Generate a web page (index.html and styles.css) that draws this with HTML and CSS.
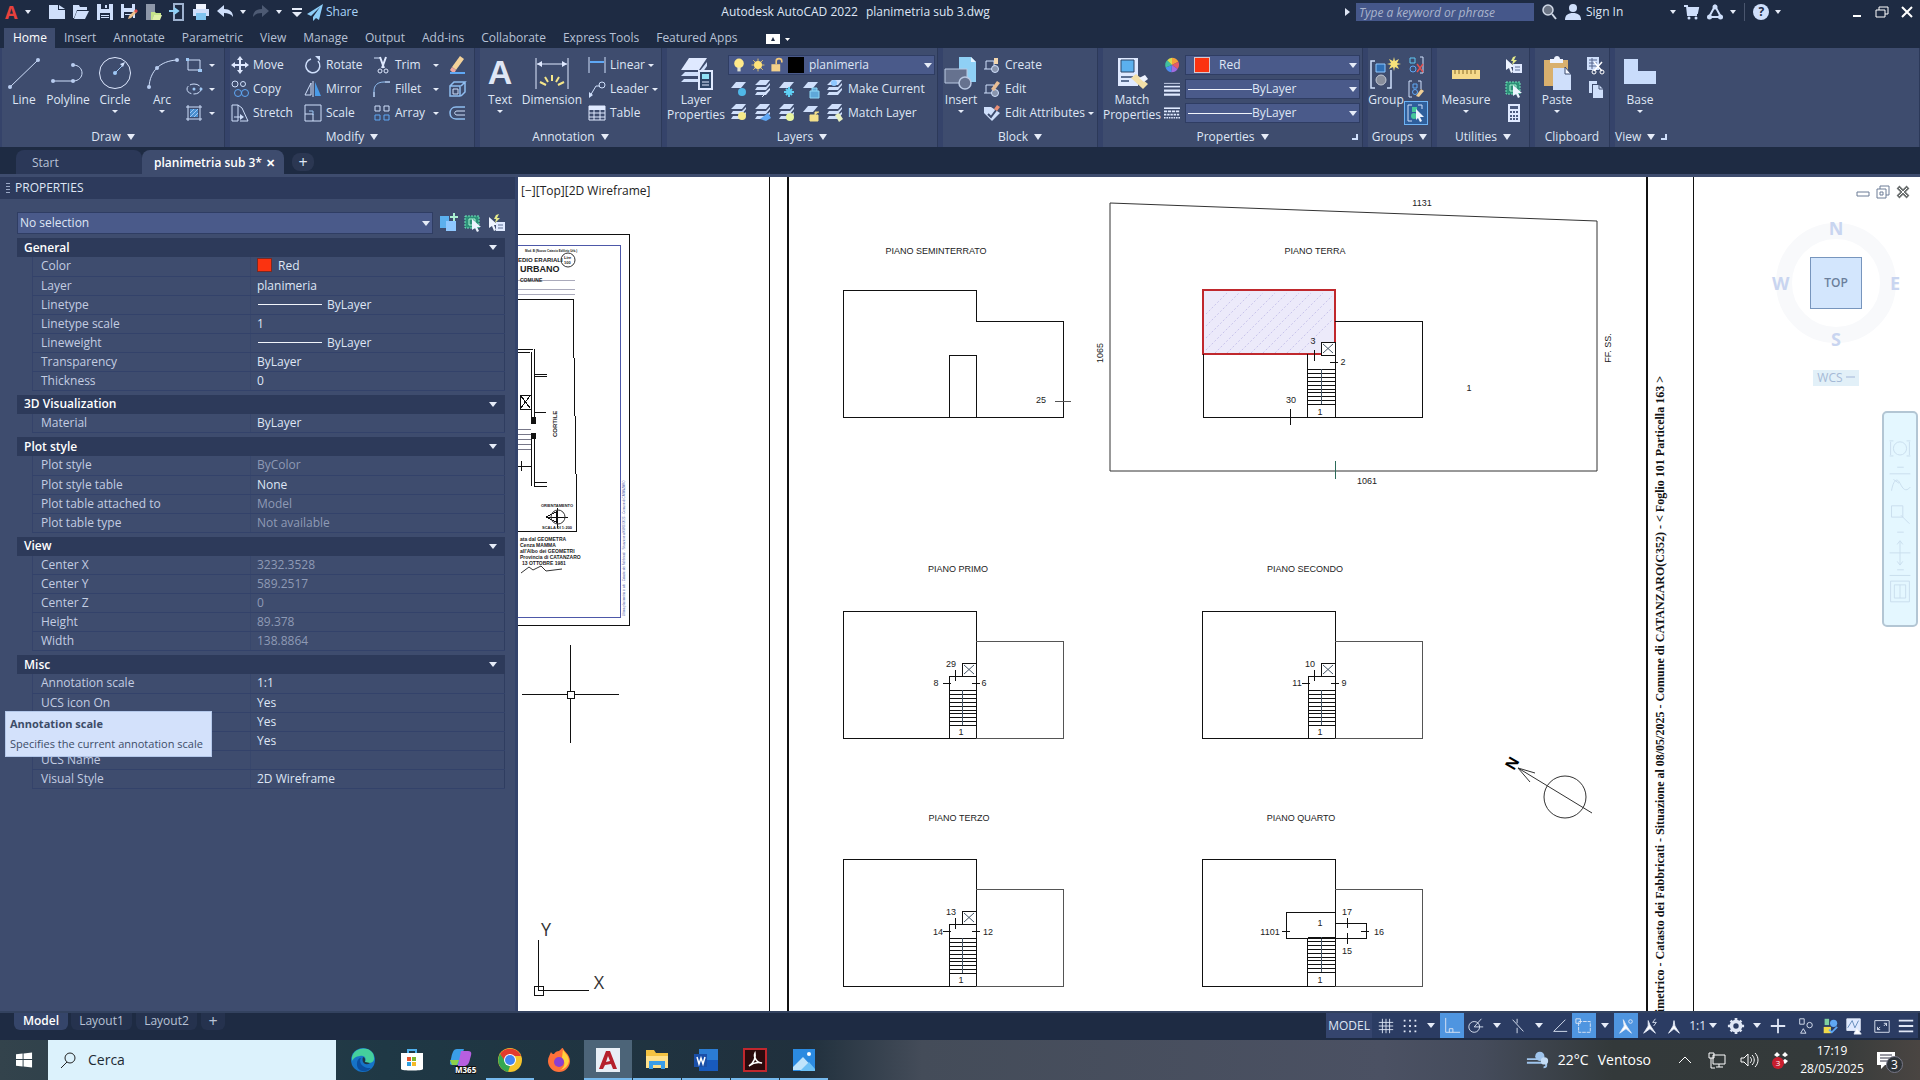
FILE: index.html
```
<!DOCTYPE html>
<html lang="en">
<head>
  <meta charset="UTF-8">
  <meta name="viewport" content="width=device-width, initial-scale=1.0">
  <title>Autodesk AutoCAD 2022 - planimetria sub 3.dwg</title>
  <link rel="stylesheet" href="styles.css">
</head>
<body>
  <!-- Icon sheet -->
  <svg class="sheet" aria-hidden="true">
    <symbol id="i-new" viewBox="0 0 18 18"><path d="M1 2h9v5h7v9H1z" fill="#cfdffb"/><path d="M11 2l6 4h-6z" fill="#cfdffb"/></symbol>
    <symbol id="i-open" viewBox="0 0 18 18"><path d="M1 2h6l1 2h7v3H5L2 15H1z" fill="#cfdffb"/><path d="M5 8h12l-4 8H2z" fill="#cfdffb"/></symbol>
    <symbol id="i-save" viewBox="0 0 18 18"><path d="M1 1h16v16H1z" fill="#cfdffb"/><path d="M5 1h8v5H5zM4 10h10v7H4z" fill="#1e2b43"/><path d="M9 2h2v3H9zM5 12h8v1H5zM5 14h8v1H5z" fill="#cfdffb"/></symbol>
    <symbol id="i-saveas" viewBox="0 0 18 18"><path d="M1 1h14v14H1z" fill="#cfdffb"/><path d="M4 1h8v4H4zM4 9h9v6H4z" fill="#1e2b43"/><path d="M5 11h7v1H5z" fill="#cfdffb"/><path d="M8 16l1-3 6-6 2 2-6 6z" fill="#eec08a"/><path d="M14 8l2-2 2 2-2 2z" fill="#e0504f"/></symbol>
    <symbol id="i-web" viewBox="0 0 18 18"><path d="M2 1h9v16H2z" fill="#8d97a8"/><path d="M7 9h4l1 1h5v2h-7l-2 5H7z" fill="#c5e48a"/><path d="M10 12h8l-2 5H8z" fill="#e0f2a8"/></symbol>
    <symbol id="i-mobile" viewBox="0 0 18 18"><path d="M6 1h9v16H6z" fill="none" stroke="#9fb3d0" stroke-width="2"/><path d="M1 8h8M6 5l4 3-4 3" stroke="#8fd0f5" stroke-width="2" fill="none"/></symbol>
    <symbol id="i-print" viewBox="0 0 18 18"><path d="M4 1h10v5H4z" fill="#f0f5ff"/><path d="M1 6h16v7H1z" fill="#cfdffb"/><path d="M4 10h10v7H4z" fill="#7fc4f0"/></symbol>
    <symbol id="i-undo" viewBox="0 0 18 18"><path d="M1 8l7-6v4c6 0 9 3 9 8-2-3-5-4-9-4v4z" fill="#cfdffb"/></symbol>
    <symbol id="i-redo" viewBox="0 0 18 18"><path d="M17 8l-7-6v4c-6 0-9 3-9 8 2-3 5-4 9-4v4z" fill="#4d5a73"/></symbol>
    <symbol id="i-share" viewBox="0 0 18 18"><path d="M17 1L1 11l4 2 9-9-7 10v4l3-3 3 2z" fill="#8ccdf8"/></symbol>
    <symbol id="i-search" viewBox="0 0 18 18"><circle cx="8" cy="7" r="5" fill="#6b7484" stroke="#cfd8e6" stroke-width="1.5"/><path d="M12 11l4 5" stroke="#cfd8e6" stroke-width="2"/></symbol>
    <symbol id="i-user" viewBox="0 0 18 18"><circle cx="9" cy="5" r="4" fill="#cfdffb"/><path d="M1 17c0-5 3-7 8-7s8 2 8 7z" fill="#cfdffb"/></symbol>
    <symbol id="i-cart" viewBox="0 0 18 18"><path d="M2 3h3l1 9h9M6 5h10l-1 5H6" stroke="#cfdffb" stroke-width="2" fill="none"/><path d="M6 5h10l-1 4H6z" fill="#cfdffb"/><circle cx="7" cy="15" r="1.5" fill="#cfdffb"/><circle cx="14" cy="15" r="1.5" fill="#cfdffb"/></symbol>
    <symbol id="i-adsk" viewBox="0 0 18 18"><path d="M9 3l-6 11h12z" fill="none" stroke="#cfdffb" stroke-width="2"/><circle cx="9" cy="4" r="2.500" fill="#cfdffb"/><circle cx="3.500" cy="14" r="2.500" fill="#cfdffb"/><circle cx="14.500" cy="14" r="2.500" fill="#cfdffb"/></symbol>

    <symbol id="i-line" viewBox="0 0 34 34"><path d="M3 31L31 4" stroke="#cfdffb"/><circle cx="3" cy="31" r="2" fill="#b9cdf0"/><circle cx="31" cy="4" r="2" fill="#b9cdf0"/></symbol>
    <symbol id="i-pline" viewBox="0 0 34 34"><path d="M2 25h20c12 0 12-16 0-16" stroke="#cfdffb" fill="none"/><circle cx="2" cy="25" r="2" fill="#b9cdf0"/><circle cx="22" cy="25" r="2" fill="#b9cdf0"/><circle cx="22" cy="9" r="2" fill="#b9cdf0"/></symbol>
    <symbol id="i-circle" viewBox="0 0 34 34"><circle cx="17" cy="17" r="15.500" stroke="#dfe9ff" fill="none"/><path d="M17 17l9-9" stroke="#9fc8f5"/><circle cx="17" cy="17" r="2" fill="#9fc8f5"/><path d="M27 6l-2 5-3-3z" fill="#cfdffb"/></symbol>
    <symbol id="i-arc" viewBox="0 0 34 34"><path d="M4 31C5 15 15 5 32 4" stroke="#cfdffb" fill="none"/><circle cx="4" cy="31" r="2" fill="#b9cdf0"/><circle cx="12" cy="12" r="2" fill="#b9cdf0"/><circle cx="32" cy="4" r="2" fill="#b9cdf0"/></symbol>
    <symbol id="i-rect" viewBox="0 0 20 20"><path d="M4 5h12v10H4z" stroke="#cfdffb" fill="none"/><path d="M2 3h3v3H2zM14 14h4v3h-4z" fill="#9fc8f5"/></symbol>
    <symbol id="i-ellipse" viewBox="0 0 20 20"><ellipse cx="10" cy="10" rx="7" ry="5" stroke="#cfdffb" stroke-dasharray="10 2" fill="none"/><circle cx="10" cy="10" r="1.500" fill="#9fc8f5"/><circle cx="17" cy="10" r="1.500" fill="#9fc8f5"/></symbol>
    <symbol id="i-hatch" viewBox="0 0 20 20"><path d="M4 2v16M16 2v16M2 4h16M2 16h16" stroke="#cfdffb"/><path d="M6 6h8v8H6z" fill="#4a8fd0"/><path d="M6 10l4-4M6 14l8-8M10 14l4-4" stroke="#9fc8f5"/></symbol>
    <symbol id="i-move" viewBox="0 0 20 20"><path d="M10 4v12M4 10h12" stroke="#dfe9ff" stroke-width="2"/><path d="M10 1l3 4H7zM10 19l3-4H7zM1 10l4-3v6zM19 10l-4-3v6z" fill="#dfe9ff"/></symbol>
    <symbol id="i-copy" viewBox="0 0 20 20"><g fill="none"><circle cx="5" cy="5" r="3" stroke="#cfdffb"/><circle cx="13" cy="5" r="2.500" stroke="#cfdffb"/><circle cx="8" cy="14" r="3.500" stroke="#5fa8f5"/><circle cx="15" cy="14" r="3.500" stroke="#5fa8f5"/></g></symbol>
    <symbol id="i-stretch" viewBox="0 0 20 20"><path d="M2 2h6v16H2zM8 2l4 3M12 5l6 13h-8" stroke="#cfdffb" fill="none"/><path d="M4 14h7" stroke="#cfdffb"/><path d="M14 14l-4-3v6z" fill="#cfdffb"/></symbol>
    <symbol id="i-rotate" viewBox="0 0 20 20"><path d="M8 4a7 7 0 1 0 7 2" stroke="#cfdffb" stroke-width="1.500" fill="none"/><path d="M12 1h5v5z" fill="#cfdffb"/></symbol>
    <symbol id="i-mirror" viewBox="0 0 20 20"><path d="M8 4v12H2z" stroke="#cfdffb" fill="none"/><path d="M10 2v16" stroke="#cfdffb"/><path d="M12 3l6 14h-6z" fill="#4a9be8"/></symbol>
    <symbol id="i-scale" viewBox="0 0 20 20"><path d="M2 2h16v16H2zM2 11h8v7" stroke="#cfdffb" fill="none"/><path d="M6 8h4v4" stroke="#9fc8f5" fill="none"/></symbol>
    <symbol id="i-trim" viewBox="0 0 20 20"><path d="M2 3h7" stroke="#cfdffb"/><path d="M8 2l4 11M14 2l-4 11" stroke="#dfe9ff" stroke-width="2"/><circle cx="8" cy="16" r="2" stroke="#dfe9ff" fill="none"/><circle cx="14" cy="16" r="2" stroke="#dfe9ff" fill="none"/></symbol>
    <symbol id="i-fillet" viewBox="0 0 20 20"><path d="M2 18v-6C2 6 6 3 12 3h6" stroke="#8fbdf0" fill="none"/><path d="M2 18v-5M13 3h5" stroke="#cfdffb"/></symbol>
    <symbol id="i-array" viewBox="0 0 20 20"><path d="M3 3h5v5H3zM12 3h5v5h-5z" stroke="#cfdffb" fill="none"/><path d="M3 12h5v5H3zM12 12h5v5h-5z" stroke="#5fa8f5" fill="none"/></symbol>
    <symbol id="i-erase" viewBox="0 0 20 20"><path d="M5 12l8-11 4 3-8 11z" fill="#f3d29a"/><path d="M5 12l4 3-1 2H5l-2-2z" fill="#f0a8a0"/><path d="M3 18h15" stroke="#5fa8f5" stroke-width="2"/></symbol>
    <symbol id="i-explode" viewBox="0 0 20 20"><path d="M3 7h10v10H3zM3 7l4-4h11l-4 4M18 3v10l-4 4" stroke="#8fbdf0" stroke-width="1.500" fill="none"/><path d="M6 10h5v5H6z" stroke="#cfdffb" fill="none"/></symbol>
    <symbol id="i-offset" viewBox="0 0 20 20"><path d="M18 4H9c-8 0-8 12 0 12h9" stroke="#8fbdf0" stroke-width="1.500" fill="none"/><path d="M18 8h-8c-3 0-3 4 0 4h8" stroke="#cfdffb" fill="none"/></symbol>
    <symbol id="i-dim" viewBox="0 0 34 34"><path d="M1 2v31M33 2v31M2 8h30" stroke="#dfe9ff"/><path d="M2 8l5-3v6zM32 8l-5-3v6z" fill="#dfe9ff"/><path d="M17 19v6M10 21l3 5M24 21l-3 5M5 26l6 3M29 26l-6 3" stroke="#f4e58a" stroke-width="2"/></symbol>
    <symbol id="i-linear" viewBox="0 0 20 20"><path d="M2 2v16M18 2v16" stroke="#cfdffb"/><path d="M3 7h14" stroke="#5fa8f5" stroke-width="2"/></symbol>
    <symbol id="i-leader" viewBox="0 0 20 20"><path d="M3 17l6-10h4" stroke="#cfdffb" fill="none"/><circle cx="15" cy="6" r="3" stroke="#cfdffb" fill="none"/><path d="M2 19v-6l4 3z" fill="#cfdffb"/></symbol>
    <symbol id="i-table" viewBox="0 0 20 20"><path d="M2 3h16v14H2z" stroke="#dfe9ff" fill="none"/><path d="M2 3h16v4H2z" fill="#dfe9ff"/><path d="M2 10h16M2 14h16M7 6v11M13 6v11" stroke="#dfe9ff"/></symbol>
    <symbol id="i-layers" viewBox="0 0 34 34"><path d="M10 2h18l-8 12H2z" fill="#dfe9ff"/><path d="M6 16h14l8-10v4l-7 10H2zM5 23h15v3H2z" fill="#cfdffb"/><path d="M20 15h13v18H20z" fill="#2c4466" stroke="#dfe9ff" stroke-width="2"/><path d="M23 18h7v5h-7z" fill="#8fdff5"/><path d="M23 26h7M23 29h7" stroke="#dfe9ff"/></symbol>
    <symbol id="i-ly" viewBox="0 0 20 20"><path d="M8 3h10l-5 6H3z" fill="#cfdffb"/></symbol>
    <symbol id="i-lys" viewBox="0 0 20 20"><path d="M8 1h10l-4 5H3zM5 8h9l4-4v2l-4 5H3zM5 13h8l5-4v2l-4 5H3z" fill="#cfdffb"/></symbol>
    <symbol id="i-bulb" viewBox="0 0 20 20"><circle cx="10" cy="8" r="6" fill="#ffe98a"/><path d="M8 13h4v5H8z" fill="#dfe0d0"/></symbol>
    <symbol id="i-sun" viewBox="0 0 20 20"><path d="M10 2v16M2 10h16M4 4l12 12M16 4L4 16" stroke="#ffd76a"/><circle cx="10" cy="10" r="5" fill="#ffe27a"/></symbol>
    <symbol id="i-lock" viewBox="0 0 20 20"><path d="M9 9V5c0-4 7-4 7 0v2" stroke="#f3c97a" stroke-width="2" fill="none"/><path d="M3 9h11v9H3z" fill="#f3d08a"/></symbol>
    <symbol id="i-insert" viewBox="0 0 34 34"><path d="M15 1h12l5 5v20H15z" fill="#8fd0f5"/><path d="M27 1l5 5h-5z" fill="#e5f4ff"/><path d="M1 13h22v14H1z" fill="#66728f" stroke="#b9c8e2"/><circle cx="21" cy="27" r="6" fill="#66728f" stroke="#b9c8e2" stroke-width="1.500"/></symbol>
    <symbol id="i-create" viewBox="0 0 20 20"><path d="M4 6h8v8H2" stroke="#cfdffb" fill="none"/><path d="M4 6v8" stroke="#cfdffb"/><circle cx="13" cy="14" r="3.500" fill="#8995ae" stroke="#cfdffb"/><path d="M12 3h4v6h-4z" fill="#f3d7b0"/></symbol>
    <symbol id="i-bedit" viewBox="0 0 20 20"><path d="M4 6h8v8H2M4 6v8" stroke="#cfdffb" fill="none"/><circle cx="13" cy="14" r="3.500" fill="#8995ae" stroke="#cfdffb"/><path d="M9 10l6-8 3 2-6 8z" fill="#e8bd94"/></symbol>
    <symbol id="i-attr" viewBox="0 0 20 20"><path d="M2 4h7l9 6-8 8-8-8z" fill="#cfdffb"/><path d="M6 11l3 3 6-8" stroke="#3e4c6e" stroke-width="2" fill="none"/><path d="M12 6l3-4 3 2-3 4z" fill="#e88d74"/></symbol>
    <symbol id="i-match" viewBox="0 0 34 34"><path d="M3 2h20v28H3z" fill="#dfe9ff"/><path d="M6 4h13v12H6z" fill="#5bb0ee" stroke="#2c4466"/><path d="M6 21h12M6 25h8" stroke="#5c6f92" stroke-width="2"/><path d="M16 22l5-4 12 10-5 5z" fill="#f3e0a8"/><path d="M24 22l6-3 3 4-4 3z" fill="#eef3ff"/></symbol>
    <symbol id="i-wheel" viewBox="0 0 20 20"><path d="M10 10V1a9 9 0 0 1 8 5z" fill="#f5a13a"/><path d="M10 10l8-4a9 9 0 0 1-1 9z" fill="#e35b6b"/><path d="M10 10l7 5a9 9 0 0 1-8 4z" fill="#a16be0"/><path d="M10 10l-1 9a9 9 0 0 1-7-6z" fill="#4c8df0"/><path d="M10 10l-8 3a9 9 0 0 1 2-9z" fill="#3fc0a0"/><path d="M10 10L4 4a9 9 0 0 1 6-3z" fill="#d5df52"/></symbol>
    <symbol id="i-lw" viewBox="0 0 20 20"><path d="M0 3h20" stroke="#dfe9ff"/><path d="M0 7h20" stroke="#dfe9ff" stroke-width="2"/><path d="M0 12h20M0 17h20" stroke="#dfe9ff" stroke-width="3"/></symbol>
    <symbol id="i-lt" viewBox="0 0 20 20"><path d="M0 4h20" stroke="#dfe9ff" stroke-width="2"/><path d="M0 8h20" stroke="#dfe9ff" stroke-width="2" stroke-dasharray="4 1"/><path d="M0 12h20" stroke="#dfe9ff" stroke-width="2" stroke-dasharray="3 1"/><path d="M0 16h20" stroke="#dfe9ff" stroke-width="2" stroke-dasharray="2 1"/></symbol>
    <symbol id="i-group" viewBox="0 0 34 34"><path d="M6 5H2v27h4M18 32h4V14" stroke="#cfdffb" stroke-width="1.500" fill="none"/><path d="M7 8h9v8H7z" fill="#2f6fb5" stroke="#8fc8ff"/><circle cx="12" cy="24" r="5" fill="#888e9c" stroke="#c0c6d2"/><path d="M25 1l1 4 4-2-2 4 4 1-4 1 2 4-4-2-1 4-1-4-4 2 2-4-4-1 4-1-2-4 4 2z" fill="#f7e37a"/></symbol>
    <symbol id="i-ungroup" viewBox="0 0 20 20"><path d="M4 3h5v5H4z" stroke="#5fc8f5" fill="none"/><circle cx="7" cy="14" r="3" stroke="#5fa8f5" fill="none"/><path d="M14 2h3v16h-3" stroke="#cfdffb" fill="none"/><path d="M11 9l6 8M17 9l-6 8" stroke="#e0504f" stroke-width="1.500"/></symbol>
    <symbol id="i-gedit" viewBox="0 0 20 20"><path d="M6 2H3v16h3M12 2h3v8" stroke="#cfdffb" fill="none"/><path d="M7 5h4v4H7z" stroke="#5fa8f5" fill="none"/><circle cx="9" cy="13" r="2.500" stroke="#5fa8f5" fill="none"/><path d="M10 17l5-7 3 2-5 6z" fill="#f0cf95"/></symbol>
    <symbol id="i-gsel" viewBox="0 0 20 20"><path d="M6 2H2v16h4M12 2h4v4" stroke="#cfdffb" fill="none"/><path d="M6 4h5v5H6z" fill="#46c79a"/><circle cx="8" cy="13" r="3" fill="#46c79a"/><path d="M10 6l8 8h-4l2 4-2 1-2-4-2 2z" fill="#eef4ff"/></symbol>
    <symbol id="i-measure" viewBox="0 0 34 34"><path d="M3 14h28v9H3z" fill="#f5d98b"/><path d="M6 14v4M10 14v4M14 14v4M18 14v4M22 14v4M26 14v4" stroke="#8a6d2a"/></symbol>
    <symbol id="i-qsel" viewBox="0 0 20 20"><path d="M2 4l9 8H7l2 5-2 1-2-5-3 2z" fill="#eef4ff"/><path d="M9 2l3-1-2 4h3l-5 5 1-4H7z" fill="#e5ea8a"/><path d="M9 9h9v9H9z" fill="#dfe9ff"/><path d="M11 12h5M11 15h5" stroke="#5c6f92"/></symbol>
    <symbol id="i-sel" viewBox="0 0 20 20"><path d="M2 3h14v12H2z" fill="#2c8f78" stroke="#6fe3b8" stroke-dasharray="2 1"/><path d="M6 6h6v6H6z" stroke="#a7f3d0" fill="none"/><path d="M9 6l9 8h-4l2 4-2 1-2-4-3 2z" fill="#eef4ff"/></symbol>
    <symbol id="i-calc" viewBox="0 0 20 20"><path d="M4 1h12v18H4z" fill="#dfe9ff"/><path d="M6 3h8v3H6zM6 8h2v2H6zM9 8h2v2H9zM12 8h2v2h-2zM6 12h2v2H6zM9 12h2v2H9zM12 12h2v2h-2zM6 15h2v2H6zM9 15h2v2H9zM12 15h2v2h-2z" fill="#4b5b80"/></symbol>
    <symbol id="i-paste" viewBox="0 0 34 34"><path d="M4 4h24v26H4z" fill="#d9b06e"/><path d="M10 3h4c0-4 6-4 6 0h3v4H10z" fill="#eef3ff"/><path d="M13 12h12l6 6v16H13z" fill="#cfdffb"/><path d="M25 11l6 7h-6z" fill="#f3f7ff" stroke="#3e4c6e"/></symbol>
    <symbol id="i-cut" viewBox="0 0 20 20"><path d="M2 2h12v13H2z" fill="#cfdffb"/><path d="M4 5h8M4 8h8M4 11h8M7 3v11" stroke="#55658c"/><path d="M9 7l8 9M17 7l-8 9" stroke="#fff" stroke-width="1.500"/><circle cx="9" cy="17" r="2" stroke="#fff" fill="none"/><circle cx="17" cy="17" r="2" stroke="#fff" fill="none"/></symbol>
    <symbol id="i-clip" viewBox="0 0 20 20"><path d="M4 2h8v3H7v9H4z" fill="#cfdffb"/><path d="M8 6h6l4 4v9H8z" fill="#cfdffb"/><path d="M14 6v4h4" stroke="#3e4c6e" fill="none"/></symbol>
    <symbol id="i-base" viewBox="0 0 34 34"><path d="M1 3h14v12h18v13H1z" fill="#c9dcfb"/></symbol>
    <symbol id="i-addsel" viewBox="0 0 20 20"><path d="M1 3h9v12H1z" fill="#5bb0ee"/><path d="M7 8h10v10H7z" fill="#8fc8ff"/><path d="M15 0v8M11 4h8" stroke="#a9efd0" stroke-width="2"/></symbol>

    <!-- Stair flight and lift shaft, drawn once and reused on each floor -->
    <symbol id="stairs" viewBox="0 0 28 36" overflow="visible"><path d="M0 0h27M0 4h27M0 8h27M0 12h27M0 16h27M0 20h27M0 23h27M0 27h27M0 31h27M0 35h27"/><path d="M13 0v35" stroke="#456"/></symbol>
    <symbol id="lift" viewBox="0 0 14 14" overflow="visible"><path d="M0 0h14v13H0z"/><path d="M2 2l10 9M12 2L2 11" stroke="#456" shape-rendering="auto"/></symbol>
    <symbol id="floor" viewBox="0 0 220 128" overflow="visible"><path d="M0 0h133v127H0z"/><path d="M133 30h87v97h-87" stroke="#555"/></symbol>
    <symbol id="core" viewBox="0 0 50 80" overflow="visible"><path d="M6 75V13h27M12 7v11M0 20h8M29 20h8"/><use href="#lift" x="19" y="0" width="14" height="14"/><use href="#stairs" x="6" y="27" width="28" height="36"/></symbol>
  </svg>

  <header class="titlebar">
    <button class="app-menu" aria-label="Application menu"><b>A</b><i class="caret"></i></button>
    <div class="quick">
      <button aria-label="New"><svg><use href="#i-new"/></svg></button>
      <button aria-label="Open"><svg><use href="#i-open"/></svg></button>
      <button aria-label="Save"><svg><use href="#i-save"/></svg></button>
      <button aria-label="Save as"><svg><use href="#i-saveas"/></svg></button>
      <button aria-label="Open from web"><svg><use href="#i-web"/></svg></button>
      <button aria-label="Save to web"><svg><use href="#i-mobile"/></svg></button>
      <button aria-label="Plot"><svg><use href="#i-print"/></svg></button>
      <button aria-label="Undo"><svg><use href="#i-undo"/></svg></button>
      <i class="caret"></i>
      <button aria-label="Redo"><svg><use href="#i-redo"/></svg></button>
      <i class="caret"></i>
      <button aria-label="Customize toolbar"><svg viewBox="0 0 18 18"><path d="M4 5h10v2H4zM4 9h10l-5 5z" fill="#e6ecf8"/></svg></button>
    </div>
    <button class="share"><svg><use href="#i-share"/></svg>Share</button>
    <div class="doc-title"><span>Autodesk AutoCAD 2022</span><span>planimetria sub 3.dwg</span></div>
    <div class="info">
      <i class="tri"></i>
      <input type="text" placeholder="Type a keyword or phrase" aria-label="Search help">
      <svg><use href="#i-search"/></svg>
      <button class="sign"><svg><use href="#i-user"/></svg>Sign In</button>
      <i class="caret"></i>
      <svg><use href="#i-cart"/></svg>
      <svg><use href="#i-adsk"/></svg>
      <i class="caret"></i>
      <span class="vline"></span>
      <span class="help">?</span>
      <i class="caret"></i>
    </div>
    <div class="win-btns">
      <button aria-label="Minimize"><svg viewBox="0 0 16 16"><path d="M4 12h8" stroke="#fff" stroke-width="2"/></svg></button>
      <button aria-label="Restore"><svg viewBox="0 0 16 16"><path d="M2 6h9v7H2zM5 6V3h9v7h-3" stroke="#fff" fill="none"/></svg></button>
      <button aria-label="Close"><svg viewBox="0 0 16 16"><path d="M3 3l10 10M13 3L3 13" stroke="#fff" stroke-width="2"/></svg></button>
    </div>
  </header>

  <nav class="tabs">
    <a class="active" href="#">Home</a>
    <a href="#">Insert</a>
    <a href="#">Annotate</a>
    <a href="#">Parametric</a>
    <a href="#">View</a>
    <a href="#">Manage</a>
    <a href="#">Output</a>
    <a href="#">Add-ins</a>
    <a href="#">Collaborate</a>
    <a href="#">Express Tools</a>
    <a href="#">Featured Apps</a>
    <button class="min-ribbon" aria-label="Minimize ribbon"><svg viewBox="0 0 26 12"><path d="M0 1h14v10H0z" fill="#fff"/><path d="M5 8l2-4 2 4z" fill="#1e2b43"/><path d="M19 5h5l-2.500 3z" fill="#fff"/></svg></button>
  </nav>

  <div class="ribbon">
    <section class="panel p-draw">
      <div class="tools">
        <button class="big"><svg><use href="#i-line"/></svg>Line</button>
        <button class="big"><svg><use href="#i-pline"/></svg>Polyline</button>
        <button class="big wide"><svg><use href="#i-circle"/></svg>Circle<i class="caret"></i></button>
        <button class="big"><svg><use href="#i-arc"/></svg>Arc<i class="caret"></i></button>
        <div class="col">
          <button class="sm" aria-label="Rectangle"><svg><use href="#i-rect"/></svg><i class="caret"></i></button>
          <button class="sm" aria-label="Ellipse"><svg><use href="#i-ellipse"/></svg><i class="caret"></i></button>
          <button class="sm" aria-label="Hatch"><svg><use href="#i-hatch"/></svg><i class="caret"></i></button>
        </div>
      </div>
      <h2>Draw<i class="caret"></i></h2>
    </section>

    <section class="panel p-modify">
      <div class="tools">
        <div class="col c1">
          <button class="sm"><svg><use href="#i-move"/></svg>Move</button>
          <button class="sm"><svg><use href="#i-copy"/></svg>Copy</button>
          <button class="sm"><svg><use href="#i-stretch"/></svg>Stretch</button>
        </div>
        <div class="col c2">
          <button class="sm"><svg><use href="#i-rotate"/></svg>Rotate</button>
          <button class="sm"><svg><use href="#i-mirror"/></svg>Mirror</button>
          <button class="sm"><svg><use href="#i-scale"/></svg>Scale</button>
        </div>
        <div class="col c3">
          <button class="sm"><svg><use href="#i-trim"/></svg>Trim<i class="caret"></i></button>
          <button class="sm"><svg><use href="#i-fillet"/></svg>Fillet<i class="caret"></i></button>
          <button class="sm"><svg><use href="#i-array"/></svg>Array<i class="caret"></i></button>
        </div>
        <div class="col">
          <button class="sm" aria-label="Erase"><svg><use href="#i-erase"/></svg></button>
          <button class="sm" aria-label="Explode"><svg><use href="#i-explode"/></svg></button>
          <button class="sm" aria-label="Offset"><svg><use href="#i-offset"/></svg></button>
        </div>
      </div>
      <h2>Modify<i class="caret"></i></h2>
    </section>

    <section class="panel p-anno">
      <div class="tools">
        <button class="big"><b class="letter">A</b>Text<i class="caret"></i></button>
        <button class="big xwide"><svg><use href="#i-dim"/></svg>Dimension</button>
        <div class="col fill">
          <button class="sm"><svg><use href="#i-linear"/></svg>Linear<i class="caret"></i></button>
          <button class="sm"><svg><use href="#i-leader"/></svg>Leader<i class="caret"></i></button>
          <button class="sm"><svg><use href="#i-table"/></svg>Table</button>
        </div>
      </div>
      <h2>Annotation<i class="caret"></i></h2>
    </section>

    <section class="panel p-layers">
      <div class="tools">
        <button class="big xwide"><svg><use href="#i-layers"/></svg>Layer<br>Properties</button>
        <div class="col fill">
          <div class="combo">
            <svg><use href="#i-bulb"/></svg><svg><use href="#i-sun"/></svg><svg><use href="#i-lock"/></svg><span class="swatch black"></span>
            <select aria-label="Layer"><option>planimeria</option></select>
          </div>
          <div class="icons">
            <svg><use href="#i-ly"/><circle cx="14" cy="13" r="4" fill="#4fb8e8"/></svg>
            <svg><use href="#i-lys"/><path d="M10 18l8-8" stroke="#dfe9ff"/></svg>
            <svg><use href="#i-ly"/><path d="M13 8v10M8 13h10M10 10l6 6M16 10l-6 6" stroke="#5fd0f5" stroke-width="2"/></svg>
            <svg><use href="#i-ly"/><path d="M10 12h9v7h-9zM12 12v-3h5v3" fill="#5fa8d8" stroke="#8fd8f5"/></svg>
            <svg><use href="#i-lys"/><circle cx="10" cy="4" r="3" fill="#8fc8ff"/></svg>
            <button>Make Current</button>
          </div>
          <div class="icons">
            <svg><use href="#i-lys"/><circle cx="14" cy="13" r="4" fill="#f5ea8a"/></svg>
            <svg><use href="#i-lys"/><path d="M8 16l8-6 3 5-5 3z" fill="#5fa8f5"/></svg>
            <svg><use href="#i-lys"/><circle cx="14" cy="14" r="4" fill="#e8f5a0"/></svg>
            <svg><use href="#i-ly"/><path d="M10 12h8v6h-8zM15 12v-3h4" fill="#f3e08a" stroke="#f3e08a"/></svg>
            <svg><use href="#i-lys"/><path d="M11 12l4-2 4 6-4 3z" fill="#e8f0c0"/></svg>
            <button>Match Layer</button>
          </div>
        </div>
      </div>
      <h2>Layers<i class="caret"></i></h2>
    </section>

    <section class="panel p-block">
      <div class="tools">
        <button class="big"><svg><use href="#i-insert"/></svg>Insert<i class="caret"></i></button>
        <div class="col fill">
          <button class="sm"><svg><use href="#i-create"/></svg>Create</button>
          <button class="sm"><svg><use href="#i-bedit"/></svg>Edit</button>
          <button class="sm"><svg><use href="#i-attr"/></svg>Edit Attributes<i class="caret"></i></button>
        </div>
      </div>
      <h2>Block<i class="caret"></i></h2>
    </section>

    <section class="panel p-props">
      <div class="tools">
        <button class="big xwide"><svg><use href="#i-match"/></svg>Match<br>Properties</button>
        <div class="col fill">
          <div class="line"><svg><use href="#i-wheel"/></svg><div class="combo"><span class="swatch red"></span><select aria-label="Object color"><option>Red</option></select></div></div>
          <div class="line"><svg><use href="#i-lw"/></svg><div class="combo"><span class="rule"></span><select aria-label="Lineweight"><option>ByLayer</option></select></div></div>
          <div class="line"><svg><use href="#i-lt"/></svg><div class="combo"><span class="rule"></span><select aria-label="Linetype"><option>ByLayer</option></select></div></div>
        </div>
      </div>
      <h2>Properties<i class="caret"></i><i class="launch"></i></h2>
    </section>

    <section class="panel p-groups">
      <div class="tools">
        <button class="big"><svg><use href="#i-group"/></svg>Group</button>
        <div class="col">
          <button class="sm" aria-label="Ungroup"><svg><use href="#i-ungroup"/></svg></button>
          <button class="sm" aria-label="Group edit"><svg><use href="#i-gedit"/></svg></button>
          <button class="sm on" aria-label="Group selection"><svg><use href="#i-gsel"/></svg></button>
        </div>
      </div>
      <h2>Groups<i class="caret"></i></h2>
    </section>

    <section class="panel p-utils">
      <div class="tools">
        <button class="big xwide"><svg><use href="#i-measure"/></svg>Measure<i class="caret"></i></button>
        <div class="col">
          <button class="sm" aria-label="Quick select"><svg><use href="#i-qsel"/></svg></button>
          <button class="sm" aria-label="Select all"><svg><use href="#i-sel"/></svg></button>
          <button class="sm" aria-label="Calculator"><svg><use href="#i-calc"/></svg></button>
        </div>
      </div>
      <h2>Utilities<i class="caret"></i></h2>
    </section>

    <section class="panel p-clip">
      <div class="tools">
        <button class="big"><svg><use href="#i-paste"/></svg>Paste<i class="caret"></i></button>
        <div class="col">
          <button class="sm" aria-label="Cut"><svg><use href="#i-cut"/></svg></button>
          <button class="sm" aria-label="Copy clip"><svg><use href="#i-clip"/></svg></button>
        </div>
      </div>
      <h2>Clipboard</h2>
    </section>

    <section class="panel p-view">
      <div class="tools">
        <button class="big wide"><svg><use href="#i-base"/></svg>Base<i class="caret"></i></button>
      </div>
      <h2>View<i class="caret"></i><i class="launch"></i></h2>
    </section>
  </div>

  <nav class="doc-tabs">
    <a href="#">Start</a>
    <a class="active" href="#">planimetria sub 3*<span>✕</span></a>
    <button aria-label="New drawing">+</button>
  </nav>

  <main class="work">
    <aside class="palette">
      <h1><i class="grip"></i>PROPERTIES</h1>
      <div class="pick">
        <div class="combo"><select aria-label="Selection"><option>No selection</option></select></div>
        <button aria-label="Toggle PICKADD"><svg><use href="#i-addsel"/></svg></button>
        <button aria-label="Select objects"><svg><use href="#i-sel"/></svg></button>
        <button aria-label="Quick select"><svg><use href="#i-qsel"/></svg></button>
      </div>
      <div class="groups">
        <h3>General<i class="caret"></i></h3>
        <table>
          <tr><th>Color</th><td><span class="swatch red"></span>Red</td></tr>
          <tr><th>Layer</th><td>planimeria</td></tr>
          <tr><th>Linetype</th><td><span class="rule"></span>ByLayer</td></tr>
          <tr><th>Linetype scale</th><td>1</td></tr>
          <tr><th>Lineweight</th><td><span class="rule"></span>ByLayer</td></tr>
          <tr><th>Transparency</th><td>ByLayer</td></tr>
          <tr><th>Thickness</th><td>0</td></tr>
        </table>
        <h3>3D Visualization<i class="caret"></i></h3>
        <table>
          <tr><th>Material</th><td>ByLayer</td></tr>
        </table>
        <h3>Plot style<i class="caret"></i></h3>
        <table>
          <tr><th>Plot style</th><td class="ro">ByColor</td></tr>
          <tr><th>Plot style table</th><td>None</td></tr>
          <tr><th>Plot table attached to</th><td class="ro">Model</td></tr>
          <tr><th>Plot table type</th><td class="ro">Not available</td></tr>
        </table>
        <h3>View<i class="caret"></i></h3>
        <table>
          <tr><th>Center X</th><td class="ro">3232.3528</td></tr>
          <tr><th>Center Y</th><td class="ro">589.2517</td></tr>
          <tr><th>Center Z</th><td class="ro">0</td></tr>
          <tr><th>Height</th><td class="ro">89.378</td></tr>
          <tr><th>Width</th><td class="ro">138.8864</td></tr>
        </table>
        <h3>Misc<i class="caret"></i></h3>
        <div class="tip-anchor">
          <table>
            <tr><th>Annotation scale</th><td>1:1</td></tr>
            <tr><th>UCS icon On</th><td>Yes</td></tr>
            <tr><th></th><td>Yes</td></tr>
            <tr><th></th><td>Yes</td></tr>
            <tr><th>UCS Name</th><td></td></tr>
            <tr><th>Visual Style</th><td>2D Wireframe</td></tr>
          </table>
          <div class="tooltip" role="tooltip"><b>Annotation scale</b><span>Specifies the current annotation scale</span></div>
        </div>
      </div>
    </aside>

    <div class="canvas">
      <svg class="drawing" viewBox="518 177 1402 834" preserveAspectRatio="xMinYMin slice">
        <!-- Scanned sheet -->
        <g class="ink">
          <path d="M518 234h111v391H518"/>
          <path d="M518 245h102v372H518" stroke="#4d58a8"/>
          <path d="M518 280h57M518 289h57M518 294h57" stroke="#aab"/>
          <path d="M518 299h55l4 232h-59"/>
          <path d="M518 349h15M518 352h12M534 349v70M531 352v67M534 436v50M531 436v50M534 374h13M534 376h13M534 412h12M534 482h13M534 486h13"/>
          <path d="M531 417h4v6h-4zM531 433h4v5h-4z" fill="#111"/>
          <path d="M520 395h11v14h-11zM521 396l9 12M530 396l-9 12"/>
          <path d="M518 429h13M518 434h13M518 439h13M518 444h13M518 449h13" stroke="#778"/>
          <path d="M518 466h13M521 461v10"/>
          <path d="M546 517h22M557 508v20M546 517l10-5v10z"/>
        </g>
        <circle cx="558" cy="517" r="7" class="thin"/>
        <circle cx="568" cy="260" r="7" class="thin"/>
        <text class="scan" x="518" y="262" font-size="6">EDIO ERARIALI</text>
        <text class="scan" x="520" y="272" font-size="9">URBANO</text>
        <text class="scan" x="525" y="252" font-size="3">Mod. B (Nuovo Catasto Edilizio Urb.)</text>
        <text class="scan" x="520" y="282" font-size="5">COMUNE</text>
        <text class="scan" x="564" y="259" font-size="4">Lire</text>
        <text class="scan" x="564" y="264" font-size="4">100</text>
        <text class="scan" x="541" y="507" font-size="4">ORIENTAMENTO</text>
        <text class="scan" x="542" y="529" font-size="4">SCALA DI 1:200</text>
        <text class="scan" x="520" y="541" font-size="5">ata dal  GEOMETRA</text>
        <text class="scan" x="520" y="547" font-size="5">Cenza    MAMMA</text>
        <text class="scan" x="520" y="553" font-size="5">all'Albo dei  GEOMETRI</text>
        <text class="scan" x="520" y="559" font-size="5">Provincia di CATANZARO</text>
        <text class="scan" x="522" y="565" font-size="5">13 OTTOBRE 1981</text>
        <path class="thin" d="M521 573l8-6 4 3 8-4 5 5 16-2"/>
        <text class="scan" transform="translate(557 437) rotate(-90)" font-size="6">CORTILE</text>
        <text class="note" transform="translate(625 616) rotate(-90)" font-size="3">Ultima planimetria in atti - Catasto dei Fabbricati - Situazione al 08/05/2025 - Comune di CATANZARO</text>

        <!-- Sheet border -->
        <g class="ink">
          <path d="M769 177v834M1693 177v834"/>
          <path d="M788 177v834M1647 177v834" stroke-width="2"/>
        </g>
        <text class="cadastre" transform="translate(1664 376) rotate(-90)">nimetrico - Catasto dei Fabbricati - Situazione al 08/05/2025 - Comune di CATANZARO(C352) - &lt; Foglio 101 Particella 163 &gt;</text>

        <!-- Basement -->
        <g class="ink">
          <path d="M843 290h133v31h87v96H843zM949 417v-62h27v62"/>
          <path d="M1055 401h16" stroke="#555"/>
        </g>
        <!-- Ground floor -->
        <path class="thin" d="M1110 203l487 18v250h-487z"/>
        <path d="M1203 290h132v52h-14v12h-118z" fill="#eceafa"/>
        <path d="M1206 350l57-57M1206 338l45-45M1206 326l33-33M1206 314l21-21M1215 353l60-60M1227 353l60-60M1239 353l60-60M1251 353l60-60M1263 353l60-60M1275 353l57-57M1287 353l45-45M1299 353l33-33" stroke="#c9c4ec" stroke-dasharray="2 2"/>
        <path d="M1321 354h-118v-64h132v52" class="red-line"/>
        <g class="ink">
          <path d="M1203 354v63h219v-96h-87M1335 342v75M1307 354v63M1290 409v16M1314 350v11M1330 362h8"/>
          <path d="M1335 461v18" stroke="#2c6b5a"/>
          <use href="#lift" x="1321" y="342" width="14" height="14"/>
          <use href="#stairs" x="1308" y="369" width="28" height="36"/>
        </g>
        <!-- Upper floors -->
        <g class="ink">
          <use href="#floor" x="843" y="611" width="220" height="128"/>
          <use href="#core" x="943" y="663" width="50" height="80"/>
          <use href="#floor" x="1202" y="611" width="220" height="128"/>
          <use href="#core" x="1302" y="663" width="50" height="80"/>
          <use href="#floor" x="843" y="859" width="220" height="128"/>
          <use href="#core" x="943" y="911" width="50" height="80"/>
          <use href="#floor" x="1202" y="859" width="220" height="128"/>
          <use href="#stairs" x="1308" y="937" width="28" height="36"/>
          <path d="M1335 912h-49v26h49M1335 923h31v15h-31M1307 938v48M1347 918v10M1347 933v11M1282 931h8M1361 931h8"/>
        </g>

        <g class="label">
          <text x="936" y="254">PIANO SEMINTERRATO</text>
          <text x="1315" y="254">PIANO TERRA</text>
          <text x="958" y="572">PIANO PRIMO</text>
          <text x="1305" y="572">PIANO SECONDO</text>
          <text x="959" y="821">PIANO TERZO</text>
          <text x="1301" y="821">PIANO QUARTO</text>
          <text x="1422" y="206">1131</text>
          <text x="1367" y="484">1061</text>
          <text transform="translate(1103 353) rotate(-90)">1065</text>
          <text transform="translate(1611 348) rotate(-90)">FF. SS.</text>
          <text x="1041" y="403">25</text>
          <text x="1313" y="344">3</text>
          <text x="1343" y="365">2</text>
          <text x="1291" y="403">30</text>
          <text x="1320" y="415">1</text>
          <text x="1469" y="391">1</text>
          <text x="951" y="667">29</text>
          <text x="936" y="686">8</text>
          <text x="984" y="686">6</text>
          <text x="961" y="735">1</text>
          <text x="1310" y="667">10</text>
          <text x="1297" y="686">11</text>
          <text x="1344" y="686">9</text>
          <text x="1320" y="735">1</text>
          <text x="951" y="915">13</text>
          <text x="938" y="935">14</text>
          <text x="988" y="935">12</text>
          <text x="961" y="983">1</text>
          <text x="1347" y="915">17</text>
          <text x="1347" y="954">15</text>
          <text x="1379" y="935">16</text>
          <text x="1270" y="935">1101</text>
          <text x="1320" y="926">1</text>
          <text x="1320" y="983">1</text>
        </g>

        <!-- North arrow -->
        <circle cx="1565" cy="797" r="21" class="thin"/>
        <path class="thin" d="M1518 768l74 45M1518 768l17 5M1518 768l12 14" />
        <text class="north" transform="translate(1517 766) rotate(-60)">N</text>

        <!-- Crosshair and UCS icon -->
        <g class="ink">
          <path d="M522 694h45M574 694h45M570 645v46M570 698v45M567 691h7v7h-7z"/>
          <path d="M538 940v50h51M534 986h9v9h-9z"/>
        </g>
        <text class="axis" x="546" y="936">Y</text>
        <text class="axis" x="599" y="989">X</text>
      </svg>

      <span class="vp-label">[−][Top][2D Wireframe]</span>
      <div class="vp-btns">
        <button aria-label="Minimize viewport"><svg viewBox="0 0 14 14"><path d="M1 7h12v4H1z" fill="none" stroke="#6c7c96"/></svg></button>
        <button aria-label="Restore viewport"><svg viewBox="0 0 14 14"><path d="M1 4h9v9H1zM4 4V1h9v9h-3M4 7h3v3H4z" fill="none" stroke="#6c7c96"/></svg></button>
        <button aria-label="Close viewport"><svg viewBox="0 0 14 14"><path d="M2 2l10 10M12 2L2 12" stroke="#6c7070" stroke-width="4"/><path d="M3 3l8 8M11 3l-8 8" stroke="#fff"/></svg></button>
      </div>
      <div class="cube">
        <span>N</span>
        <span class="w">W</span><button>TOP</button><span class="e">E</span>
        <span class="s">S</span>
        <button class="wcs">WCS <i></i></button>
      </div>
      <div class="navbar">
        <svg viewBox="0 0 34 212"><g fill="none" stroke="#c9dded"><circle cx="17" cy="31" r="7"/><path d="M6 23h4M24 23h4M6 39h4M24 39h4M7 24v14M27 24v14M14 51h7M6 58h22M8 76c2-12 6-14 9-8s6 10 11 4M10 64l6 4M8 92h12v12H8zM18 102l9 9M14 120h7M17 130v24M6 142h22M14 133l3-4 3 4M14 151l3 4 3-4M14 160h7M6 166h22M7 172h20v22H7zM11 176h12v14H11zM17 176v14"/></g></svg>
      </div>
    </div>
  </main>

  <footer class="status">
    <nav class="layouts">
      <a class="active" href="#">Model</a>
      <a href="#">Layout1</a>
      <a href="#">Layout2</a>
      <button aria-label="New layout">+</button>
    </nav>
    <div class="modes">
      <button class="model">MODEL</button>
      <button class="m"><svg viewBox="0 0 20 20"><path d="M6 2v16M10 2v16M14 2v16M2 6h16M2 10h16M2 14h16"/></svg></button>
      <button class="m"><svg viewBox="0 0 20 20"><path d="M3 4h14M3 10h14M3 16h14" stroke-width="2" stroke-dasharray="2 4"/></svg></button>
      <i class="caret"></i>
      <button class="m on"><svg viewBox="0 0 20 20"><path d="M3 1v16h16M7 17v-4h4v4"/></svg></button>
      <button class="m"><svg viewBox="0 0 20 20"><circle cx="8" cy="11" r="6"/><path d="M8 11h10M8 11l8-9"/></svg></button>
      <i class="caret"></i>
      <button class="m"><svg viewBox="0 0 20 20"><path d="M4 3l12 13M9 2v5M9 12v6"/></svg></button>
      <i class="caret"></i>
      <button class="m"><svg viewBox="0 0 20 20"><path d="M16 3L3 16h15"/></svg></button>
      <button class="m on"><svg viewBox="0 0 20 20"><path d="M4 5h13v12H4z" stroke-dasharray="4 1"/><path d="M1 2h5v5H1z"/></svg></button>
      <i class="caret"></i>
      <button class="m on"><svg viewBox="0 0 20 20"><path d="M7 3l3 6 6 9-6-5-7 5 5-8z" fill="#fff"/><circle cx="15" cy="5" r="2"/></svg></button>
      <button class="m"><svg viewBox="0 0 20 20"><path d="M8 4l2 5 6 9-6-5-7 5 5-8z" fill="#fff"/><path d="M16 2l-3 4h4l-3 4"/></svg></button>
      <button class="m"><svg viewBox="0 0 20 20"><path d="M10 4l1 6 5 8-6-5-6 5 5-8z" fill="#fff"/></svg></button>
      <button class="scale">1:1<i class="caret"></i></button>
      <button class="m"><svg viewBox="0 0 20 20"><circle cx="10" cy="10" r="5" stroke-width="4"/><path d="M10 1v3M10 16v3M1 10h3M16 10h3M4 4l2 2M14 14l2 2M16 4l-2 2M6 14l-2 2" stroke-width="3"/></svg></button>
      <i class="caret"></i>
      <button class="m"><svg viewBox="0 0 20 20"><path d="M10 2v16M2 10h16" stroke-width="2"/></svg></button>
      <button class="m gap"><svg viewBox="0 0 20 20"><path d="M3 2h5v6H3zM7 13l3 5H4z"/><circle cx="14" cy="9" r="3"/></svg></button>
      <button class="m"><svg viewBox="0 0 20 20"><path d="M4 2h5v7H4z" fill="#7fd0a0" stroke="none"/><circle cx="14" cy="7" r="4" fill="#5fa8f5" stroke="none"/><path d="M3 11h8v7H3z" fill="#f0d94a" stroke="none"/><path d="M9 14l3 3 6-6" stroke="#5fa8f5" stroke-width="2"/></svg></button>
      <button class="m"><svg viewBox="0 0 20 20"><path d="M2 2h15v13H2z" fill="#dfe9ff"/><path d="M3 12l5-8 3 8 4-8" stroke="#5c86b5"/><path d="M13 12l5 7h-8z" fill="#fff"/></svg></button>
      <button class="m gap"><svg viewBox="0 0 20 20"><path d="M2 4h16v13H2zM5 14l3-3M15 7l-3 3M5 11v3h3M12 7h3v3"/></svg></button>
      <button class="m"><svg viewBox="0 0 20 20"><path d="M2 4h16M2 10h16M2 16h16" stroke-width="2"/></svg></button>
    </div>
  </footer>

  <div class="taskbar">
    <button class="start" aria-label="Start"><svg viewBox="0 0 18 18"><path d="M0 3l7-1v6H0zM8 2l9-1v7H8zM0 9h7v7l-7-1zM8 9h9v8l-9-1z" fill="#fff"/></svg></button>
    <label class="search"><svg viewBox="0 0 18 18"><circle cx="11" cy="7" r="5" fill="none" stroke="#222"/><path d="M8 11l-6 6" stroke="#222"/></svg><input type="text" placeholder="Cerca"></label>
    <div class="apps">
      <button aria-label="Edge"><svg viewBox="0 0 24 24"><circle cx="12" cy="12" r="12" fill="#1673c8"/><path d="M1 9C4-3 24-2 23 11c0 4-6 5-9 3 2-4-1-7-5-6-4 0-7 3-8 5z" fill="#45cf9c"/><path d="M10 10c-3 4 2 11 10 10-6 6-15 3-14-5 0-3 2-5 4-5z" fill="#0b4fa0"/><path d="M12 9c3 1 2 4 2 5l5 1c-4 3-9 0-7-6z" fill="#203744"/></svg></button>
      <button aria-label="Store"><svg viewBox="0 0 24 24"><path d="M8 6V2h8v4" fill="none" stroke="#4fb0ee" stroke-width="2"/><path d="M1 5h22v16c0 2-22 2-22 0z" fill="#fff"/><path d="M7 9h4v4H7z" fill="#e8532d"/><path d="M12 9h4v4h-4z" fill="#7cb82f"/><path d="M7 14h4v4H7z" fill="#2e9fe0"/><path d="M12 14h4v4h-4z" fill="#f5ba28"/></svg></button>
      <button aria-label="M365"><svg viewBox="0 0 24 24"><path d="M8 1h7l-5 16H3c-3 0-2-3-1-6 1-5 2-10 6-10z" fill="#3a9de8"/><path d="M12 3h7c5 0 3 4 2 8-1 5-3 7-6 7H9z" fill="#b75fe0"/><path d="M1 12h9l-2 5H3z" fill="#8fd04a"/></svg><small>M365</small></button>
      <button class="run" aria-label="Chrome"><svg viewBox="0 0 24 24"><circle cx="12" cy="12" r="12" fill="#f5c42c"/><path d="M2 6a12 12 0 0 1 20 0l1 2H12l-5 6z" fill="#e33b2e"/><path d="M2 6l7 10 3 2-2 6A12 12 0 0 1 2 6z" fill="#35a852"/><circle cx="12" cy="12" r="6" fill="#fff"/><circle cx="12" cy="12" r="5" fill="#4285f4"/></svg></button>
      <button aria-label="Firefox"><svg viewBox="0 0 24 24"><path d="M12 3c2-1 2-3 4-3 0 3 7 6 7 13A11 11 0 0 1 1 13c0-4 2-6 3-9 1 2 2 2 3 2 1-2 3-3 5-3z" fill="#ff7139"/><path d="M16 1c1 4 6 6 6 12a10 10 0 0 1-9 9c6-3 5-9 2-12z" fill="#ffd23c"/><circle cx="12" cy="14" r="5" fill="#8a3fd0"/></svg></button>
      <button class="run now" aria-label="AutoCAD"><svg viewBox="0 0 24 24"><path d="M0 0h24v24H0z" fill="#e8eef6"/><path d="M10 3h4l7 18h-4l-2-5-6 1-2 4H3z" fill="#b5202c"/><path d="M12 8l2 5-4 1z" fill="#e8eef6"/></svg></button>
      <button class="run" aria-label="Explorer"><svg viewBox="0 0 24 24"><path d="M1 2h8l2 3h12v15H1z" fill="#f3c242"/><path d="M1 8h22v12H1z" fill="#ffe08a"/><path d="M4 13h16v8h-4v-4H8v4H4z" fill="#3a9de8"/></svg></button>
      <button class="run" aria-label="Word"><svg viewBox="0 0 24 24"><path d="M5 1h19v22H5z" fill="#2b7cd3"/><path d="M5 12h19v11H5z" fill="#185abd"/><path d="M0 6h13v13H0z" fill="#1a4fa8"/><path d="M3 9l2 7 2-6 2 6 2-7" fill="none" stroke="#fff" stroke-width="1.500"/></svg></button>
      <button class="run" aria-label="Acrobat"><svg viewBox="0 0 24 24"><path d="M1 1h22v22H1z" fill="#2a0a0c" stroke="#c0272d" stroke-width="2"/><path d="M6 18c5-3 7-9 6-13-2 4 2 10 7 10-4-1-9 0-13 3z" fill="none" stroke="#fff" stroke-width="1.500"/></svg></button>
      <button class="run" aria-label="Photos"><svg viewBox="0 0 24 24"><path d="M1 1h22v22H1z" fill="#2b8ae0"/><path d="M1 19l10-10 12 13H1z" fill="#bfe4fb"/><path d="M8 23l9-9 6 7v2z" fill="#6cc0f5"/><circle cx="17" cy="6" r="2" fill="#fff"/></svg></button>
    </div>
    <div class="tray">
      <svg class="weather" viewBox="0 0 26 20"><path d="M1 9h14c4 0 4-6 0-6M1 13h18c4 0 4 5 0 5" fill="none" stroke="#9fc4ec" stroke-width="2"/><circle cx="15" cy="6" r="5" fill="#9fc4ec"/><circle cx="20" cy="11" r="4" fill="#c4dcf5"/></svg>
      <span class="temp">22°C<span>Ventoso</span></span>
      <svg viewBox="0 0 20 20"><path d="M4 13l6-6 6 6" fill="none" stroke="#fff"/></svg>
      <svg viewBox="0 0 20 20"><path d="M6 5h12v9H6zM2 3h5v5H2zM4 8v10h4M9 17h7M12 14v3" fill="none" stroke="#fff"/></svg>
      <svg viewBox="0 0 20 20"><path d="M2 8h3l4-4v12l-4-4H2zM11 7c2 2 2 4 0 6M13 5c3 3 3 7 0 10M16 3c4 4 4 10 0 14" fill="none" stroke="#fff"/></svg>
      <svg class="drop" viewBox="0 0 20 20"><path d="M6 2l3 3-3 2-3-2zM14 2l3 3-3 2-3-2zM14 9l3 2-3 3-3-3z" fill="#fff"/><circle cx="7" cy="13" r="6" fill="#c81e2e"/><text x="7" y="16" font-size="8" fill="#fff" text-anchor="middle">3</text></svg>
      <time>17:19<br>28/05/2025</time>
      <button class="notif" aria-label="Notifications"><svg viewBox="0 0 20 20"><path d="M1 2h18v13H9l-4 4v-4H1z" fill="#fff"/><path d="M4 5h12M4 8h12M4 11h8" stroke="#334"/></svg><span>3</span></button>
    </div>
  </div>
</body>
</html>
```

FILE: styles.css
```
* {
  box-sizing: border-box;
}
body {
  margin: 0;
  height: 100vh;
  overflow: hidden;
  display: flex;
  flex-direction: column;
  font-family: "Open Sans", "Noto Sans", sans-serif;
  font-size: 12px;
  line-height: 16px;
  color: #dfe6f5;
  background: #1e2b43;
}
button, input, select {
  font: inherit;
  color: inherit;
  background: none;
  border: 0;
  padding: 0;
  margin: 0;
}
a {
  color: inherit;
  text-decoration: none;
}
h1, h2, h3 {
  margin: 0;
  font-size: 12px;
  font-weight: normal;
}
svg {
  display: block;
  flex: none;
  width: 20px;
  height: 20px;
}
.sheet {
  position: absolute;
  width: 0;
  height: 0;
}
.caret {
  flex: none;
  width: 0;
  height: 0;
  border: 4px solid transparent;
  border-top: 5px solid #e6ecf8;
  border-bottom: 0;
}

/* Title bar */
.titlebar {
  flex: none;
  height: 24px;
  display: flex;
  align-items: center;
}
.titlebar svg {
  width: 18px;
  height: 18px;
}
.titlebar .caret {
  border-width: 3px;
  border-top-width: 4px;
  border-bottom: 0;
}
.app-menu {
  width: 48px;
  display: flex;
  align-items: center;
  gap: 8px;
  padding-left: 5px;
}
.app-menu b {
  font-size: 18px;
  color: #e8413c;
}
.quick {
  width: 258px;
  display: flex;
  align-items: center;
  gap: 6px;
}
.share {
  display: flex;
  align-items: center;
  gap: 2px;
  color: #a9d4f8;
}
.doc-title {
  flex: 1;
  display: flex;
  justify-content: center;
  gap: 8px;
  padding-left: 8px;
}
.info {
  display: flex;
  align-items: center;
  width: 448px;
  gap: 6px;
}
.info input {
  width: 178px;
  height: 18px;
  padding: 0 3px;
  background: #45578a;
  font-style: italic;
}
.info input::placeholder {
  color: #a9b4cc;
  opacity: 1;
}
.tri {
  border: 4px solid transparent;
  border-left: 5px solid #dfe6f5;
  border-right: 0;
}
.sign {
  display: flex;
  align-items: center;
  gap: 4px;
  margin-right: 41px;
}
.vline {
  width: 1px;
  height: 18px;
  background: #4a566e;
  margin: 0 2px;
}
.help {
  width: 16px;
  height: 16px;
  border-radius: 50%;
  background: #cfdffb;
  color: #1e2b43;
  font-weight: bold;
  text-align: center;
}
.win-btns {
  display: flex;
  gap: 9px;
  margin: 0 5px 0 56px;
}
.win-btns svg {
  width: 16px;
  height: 16px;
}

/* Ribbon tabs */
.tabs {
  flex: none;
  height: 24px;
  display: flex;
  align-items: flex-end;
  padding-left: 4px;
}
.tabs a {
  height: 20px;
  line-height: 20px;
  padding: 0 8px 0 9px;
  color: #b8c2d6;
}
.tabs a.active {
  background: #3e4c6e;
  color: #fff;
}
.min-ribbon {
  margin: 0 0 3px 20px;
}
.min-ribbon svg {
  width: 26px;
  height: 12px;
}

/* Ribbon */
.ribbon {
  flex: none;
  height: 99px;
  display: flex;
  gap: 5px;
  padding-left: 2px;
  background: #35436a;
}
.panel {
  flex: none;
  display: flex;
  flex-direction: column;
  padding-top: 5px;
  background: #3e4c6e;
  border-right: 1px solid #2c3959;
}
.p-draw { width: 223px; }
.p-modify { width: 245px; }
.p-anno { width: 182px; }
.p-layers { width: 271px; }
.p-block { width: 155px; }
.p-props { width: 260px; }
.p-groups { width: 64px; }
.p-utils { width: 93px; }
.p-clip { width: 75px; }
.p-view {
  flex: 1;
}
.tools {
  display: flex;
  height: 72px;
}
.panel h2 {
  position: relative;
  display: flex;
  justify-content: center;
  align-items: center;
  gap: 6px;
  height: 22px;
  padding-top: 2px;
}
.panel h2 .caret {
  border-width: 4px;
  border-top-width: 6px;
  border-bottom: 0;
}
.p-view h2 {
  justify-content: flex-start;
}
.launch {
  width: 6px;
  height: 6px;
  border-right: 2px solid #cfdffb;
  border-bottom: 2px solid #cfdffb;
}
.p-props .launch {
  position: absolute;
  right: 4px;
}
.big {
  flex: none;
  width: 44px;
  height: 72px;
  display: flex;
  flex-direction: column;
  align-items: center;
  padding-top: 3px;
  line-height: 15px;
  text-align: center;
}
.big.wide { width: 50px; }
.big.xwide { width: 58px; }
.big svg, .big .letter {
  width: 34px;
  height: 34px;
  margin-bottom: 2px;
}
.big .letter {
  font-family: "Liberation Sans", Arial, sans-serif;
  font-size: 34px;
  line-height: 32px;
}
.big .caret {
  margin-top: 3px;
}
.big .caret, .sm .caret {
  border-width: 3px;
  border-top-width: 3px;
  border-bottom: 0;
}
.p-anno .big { width: 40px; }
.p-anno .xwide { width: 64px; }
.col {
  display: flex;
  flex-direction: column;
}
.col.fill {
  flex: 1;
  min-width: 0;
  padding: 0 2px 0 3px;
}
.col.c1 { width: 73px; }
.col.c2 { width: 69px; }
.col.c3 { width: 75px; }
.sm {
  height: 24px;
  display: flex;
  align-items: center;
  gap: 3px;
  white-space: nowrap;
}
.sm .caret {
  margin-left: auto;
  margin-right: 8px;
}
.p-draw .sm .caret {
  margin-left: 2px;
}
.p-block .sm .caret {
  margin-right: 2px;
}
.p-groups .big, .p-block .big { width: 36px; }
.p-groups .sm { padding: 0 2px; }
.sm.on {
  background: #2f5f9c;
  outline: 1px solid #6fb4f5;
  outline-offset: -1px;
}
.combo {
  flex: none;
  height: 20px;
  display: flex;
  align-items: center;
  gap: 3px;
  padding: 0 2px;
  background: #4a5a8a;
  border: 1px solid #2f3d63;
}
.combo::after {
  content: "";
  border: 4px solid transparent;
  border-top: 5px solid #e6ecf8;
  border-bottom: 0;
}
.combo select {
  flex: 1;
  min-width: 0;
  appearance: none;
  outline: 0;
}
.combo svg {
  width: 16px;
  height: 16px;
}
.swatch {
  flex: none;
  display: inline-block;
  width: 16px;
  height: 16px;
}
.black { background: #000; }
.red { background: #fb3310; }
.rule {
  flex: none;
  display: inline-block;
  width: 64px;
  height: 1px;
  background: #f2f5fb;
}
.p-layers .combo {
  margin: 2px 0;
}
.p-layers .combo select {
  padding-left: 2px;
}
.icons {
  height: 24px;
  display: flex;
  align-items: center;
  gap: 4px;
  white-space: nowrap;
}
.line {
  height: 24px;
  display: flex;
  align-items: center;
  gap: 5px;
}
.line svg {
  width: 16px;
  height: 18px;
}
.line .combo {
  flex: 1;
}
.line .rule {
  margin-right: -3px;
}
.line .red {
  margin: 0 6px;
  border: 1px solid #d8c8cc;
}
.p-utils .col {
  margin-left: 9px;
}
.p-clip .col {
  margin-left: 6px;
}

/* Drawing tabs */
.doc-tabs {
  flex: none;
  height: 30px;
  display: flex;
  align-items: flex-end;
  padding: 0 0 3px 16px;
  border-bottom: 3px solid #3e4c6e;
}
.doc-tabs a {
  height: 24px;
  line-height: 26px;
  margin-bottom: -3px;
  padding: 0 16px;
  background: #2b3858;
  color: #b8c2d6;
  border-radius: 8px 8px 0 0;
  width: 126px;
}
.doc-tabs a.active {
  width: 142px;
  padding: 0 0 0 12px;
  background: #3e4c6e;
  color: #fff;
  font-weight: 600;
  white-space: nowrap;
}
.doc-tabs span {
  margin-left: 4px;
  font-size: 11px;
}
.doc-tabs button {
  width: 22px;
  height: 18px;
  margin-left: 8px;
  font-size: 16px;
  border-radius: 8px;
  background: #2b3752;
}

/* Properties palette */
.work {
  flex: 1;
  min-height: 0;
  display: flex;
}
.palette {
  flex: none;
  width: 518px;
  background: #3e4c6e;
  border-right: 3px solid #33436b;
}
.palette h1 {
  display: flex;
  align-items: center;
  gap: 5px;
  height: 22px;
  padding-left: 6px;
  background: #2d3a5c;
}
.grip {
  width: 4px;
  height: 10px;
  background: repeating-linear-gradient(#9aa8c6 0 1px, #2d3a5c 1px 3px);
}
.pick {
  display: flex;
  align-items: center;
  gap: 4px;
  padding: 13px 8px 4px 17px;
}
.pick .combo {
  flex: 1;
  height: 22px;
  margin-right: 2px;
}
.groups {
  margin: 0 10px 0 17px;
}
.groups h3 {
  display: flex;
  align-items: center;
  justify-content: space-between;
  height: 19px;
  padding: 0 8px 0 7px;
  background: #2d3a5a;
  font-weight: 600;
  color: #fff;
}
.groups table {
  width: calc(100% - 15px);
  margin: 0 0 4px 15px;
  border-collapse: collapse;
  table-layout: fixed;
  border-left: 1px solid #35436a;
  border-right: 1px solid #2f3d60;
}
.groups tr {
  height: 19px;
}
.groups th, .groups td {
  height: 19px;
  padding: 0 0 0 6px;
  text-align: left;
  font-weight: normal;
  line-height: 18px;
  border-bottom: 1px solid #33426a;
}
.groups th {
  width: 218px;
  padding-left: 8px;
  color: #c3cde2;
  border-right: 1px solid #38476c;
}
.groups td.ro {
  color: #8e9ab5;
}
.groups .swatch {
  width: 15px;
  height: 14px;
  margin-right: 6px;
  vertical-align: -2px;
  border: 1px solid #7a2a24;
}
.groups .rule {
  margin: 0 5px 0 1px;
  vertical-align: 4px;
}
.tip-anchor {
  position: relative;
}
.tooltip {
  position: absolute;
  left: -12px;
  top: 37px;
  width: 207px;
  height: 46px;
  padding: 4px;
  display: flex;
  flex-direction: column;
  justify-content: space-between;
  font-size: 11px;
  white-space: nowrap;
  background: #d3e1fb;
  color: #3c4c68;
  border: 1px solid #b4c8ea;
}

/* Drawing area */
.canvas {
  flex: 1;
  position: relative;
  overflow: hidden;
  background: #fff;
}
.drawing {
  width: 100%;
  height: 100%;
}
.ink {
  fill: none;
  stroke: #111;
  shape-rendering: crispEdges;
}
.thin {
  fill: none;
  stroke: #333;
}
.red-line {
  fill: none;
  stroke: #c0282d;
  stroke-width: 2px;
}
.label {
  font: 9px "Liberation Sans", Arial, sans-serif;
  fill: #222;
  text-anchor: middle;
}
.scan {
  font-family: "Liberation Sans", Arial, sans-serif;
  font-weight: bold;
  fill: #222;
}
.note {
  font-family: "Liberation Sans", Arial, sans-serif;
  fill: #4d58a8;
}
.cadastre {
  font: bold 12px "Liberation Serif", "Times New Roman", serif;
  fill: #111;
  text-anchor: end;
}
.north {
  font: bold 16px "Liberation Sans", Arial, sans-serif;
  text-anchor: middle;
}
.axis {
  font: 18px "Open Sans", sans-serif;
  fill: #333;
  text-anchor: middle;
}
.vp-label {
  position: absolute;
  left: 3px;
  top: 6px;
  color: #222;
}
.vp-btns {
  position: absolute;
  right: 10px;
  top: 8px;
  display: flex;
  gap: 6px;
}
.vp-btns svg {
  width: 14px;
  height: 14px;
}
.cube {
  position: absolute;
  right: 20px;
  top: 42px;
  width: 128px;
  display: grid;
  grid-template-columns: 1fr 52px 1fr;
  grid-template-rows: 18px 92px 20px 36px;
  align-items: center;
  justify-items: center;
  font-size: 18px;
  font-weight: bold;
  color: #c9d5f0;
}
.cube::before {
  content: "";
  box-sizing: border-box;
  position: absolute;
  left: 4px;
  top: 4px;
  width: 120px;
  height: 120px;
  border: 16px solid #f8f9fb;
  border-radius: 50%;
}
.cube > * {
  position: relative;
}
.cube > span:first-child, .cube .s, .cube .wcs {
  grid-column: 1 / 4;
}
.cube .w { justify-self: start; }
.cube .e { justify-self: end; }
.cube button {
  width: 52px;
  height: 52px;
  background: #d3e6fd;
  border: 1px solid #7795bd;
  font-size: 12px;
  font-weight: 600;
  color: #6b7f9c;
}
.cube .wcs {
  width: 46px;
  height: 16px;
  margin-top: 22px;
  border: 0;
  background: #e2f0f8;
  font-weight: normal;
  color: #a5b9d6;
}
.wcs i {
  display: inline-block;
  width: 9px;
  height: 2px;
  background: #c3d3e8;
  vertical-align: 4px;
}
.navbar {
  position: absolute;
  right: 2px;
  top: 234px;
  width: 36px;
  height: 216px;
  border: 2px solid #b3c6d4;
  border-radius: 5px;
  background: #e4f7ff;
}
.navbar svg {
  width: 32px;
  height: 212px;
}

/* Layout tabs and status bar */
.status {
  flex: none;
  height: 29px;
  display: flex;
  justify-content: space-between;
  align-items: flex-start;
  border-top: 2px solid #33425f;
}
.layouts {
  display: flex;
  padding-left: 14px;
}
.layouts a, .layouts button {
  height: 17px;
  line-height: 15px;
  width: 61px;
  text-align: center;
  background: #25324e;
  color: #b8c2d6;
  border-radius: 0 0 6px 6px;
  margin-right: 4px;
}
.layouts a.active {
  width: 54px;
  margin-right: 3px;
  background: #35456a;
  color: #fff;
  font-weight: 600;
}
.layouts button {
  width: 24px;
  font-size: 16px;
}
.modes {
  height: 25px;
  display: flex;
  align-items: center;
  margin-right: 2px;
  background: #2b3c63;
}
.modes svg {
  fill: none;
  stroke: #dfe6f5;
  width: 18px;
  height: 18px;
}
.modes .model {
  width: 46px;
  height: 25px;
  margin-right: 2px;
  background: #35456e;
}
.m {
  width: 24px;
  height: 25px;
  display: flex;
  align-items: center;
  justify-content: center;
}
.m.on {
  background: #4f95e0;
}
.m.gap {
  margin-left: 4px;
}
.modes > .caret {
  margin: 0 5px;
}
.scale {
  display: flex;
  align-items: center;
  gap: 3px;
  margin: 0 7px 0 3px;
}

/* Windows taskbar */
.taskbar {
  flex: none;
  height: 40px;
  display: flex;
  align-items: center;
  color: #fff;
  background: linear-gradient(90deg, #33434c 0, #1f3845 20%, #20303d 42%, #444c59 48%, #4b5163 72%, #454c5c 77%, #33393a 84%, #343a3a 95%, #4a4542 100%);
}
.start {
  width: 48px;
  display: flex;
  justify-content: center;
}
.start svg {
  width: 17px;
  height: 18px;
}
.search {
  width: 288px;
  height: 40px;
  display: flex;
  align-items: center;
  gap: 11px;
  padding-left: 11px;
  background: #dcf2fc;
}
.search svg {
  width: 18px;
  height: 18px;
}
.search input {
  flex: 1;
  font-size: 14px;
}
.search input::placeholder {
  color: #1d2a33;
  opacity: 1;
}
.apps {
  display: flex;
  gap: 1px;
  padding-left: 3px;
}
.apps button {
  position: relative;
  width: 48px;
  height: 40px;
  display: flex;
  align-items: center;
  justify-content: center;
}
.apps svg {
  width: 24px;
  height: 24px;
}
.apps small {
  position: absolute;
  bottom: 6px;
  left: 18px;
  font-size: 8px;
  line-height: 8px;
  font-weight: bold;
  background: #111;
}
.apps .run {
  box-shadow: inset 0 -2px #76b9ed;
}
.apps .now {
  background: #4c6478;
}
.tray {
  margin-left: auto;
  display: flex;
  align-items: center;
  gap: 12px;
}
.tray .weather {
  width: 24px;
  margin-right: -4px;
}
.temp {
  font-size: 14px;
  margin-right: 12px;
}
.temp span {
  margin-left: 9px;
}
.tray time {
  width: 64px;
  margin-left: -3px;
  text-align: center;
  line-height: 18px;
}
.notif {
  position: relative;
  width: 44px;
}
.notif span {
  position: absolute;
  left: 10px;
  top: 6px;
  width: 17px;
  height: 17px;
  border-radius: 50%;
  border: 1px solid #778;
  background: #2d3338;
  line-height: 15px;
}
```
